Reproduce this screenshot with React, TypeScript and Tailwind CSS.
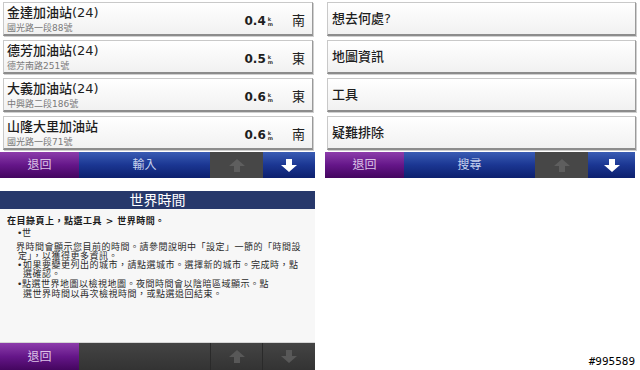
import React from "react";

const CJK = "font-['DejaVu_Sans','Noto_Sans_CJK_TC',sans-serif]";

function DownArrow({ color }: { color: string }) {
  return (
    <svg width="16" height="13" viewBox="0 0 16 13">
      <polygon points="5,0 11,0 11,6 16,6 8,13 0,6 5,6" fill={color} />
    </svg>
  );
}
function UpArrow({ color }: { color: string }) {
  return (
    <svg width="16" height="13" viewBox="0 0 16 13">
      <polygon points="5,13 11,13 11,7 16,7 8,0 0,7 5,7" fill={color} />
    </svg>
  );
}

function Unit() {
  return (
    <span className="ml-[2px] flex flex-col items-start text-[5px] text-[#333] font-bold mt-[1px]">
      <span className="leading-[5px]">k</span>
      <span className="leading-[5px]">m</span>
    </span>
  );
}

const places = [
  { name: "金達加油站(24)", addr: "國光路一段88號", dist: "0.4", dir: "南" },
  { name: "德芳加油站(24)", addr: "德芳南路251號", dist: "0.5", dir: "東" },
  { name: "大義加油站(24)", addr: "中興路二段186號", dist: "0.6", dir: "東" },
  { name: "山隆大里加油站", addr: "國光路一段71號", dist: "0.6", dir: "南" },
];

const menu = ["想去何處?", "地圖資訊", "工具", "疑難排除"];

const rowCls =
  "h-[34px] bg-linear-to-b from-[#ffffff] to-[#f1f1f1] border border-[#c9c9c9] border-b-[2px] border-b-[#8c8c8c] border-r-[#9a9a9a] shadow-[1px_1px_0_#d0d0d0]";

function ButtonBar({ middle }: { middle: string }) {
  return (
    <div className={`flex h-[26px] ${CJK}`}>
      <div className="w-[79px] flex items-center justify-center bg-linear-to-b from-[#8d3cab] via-[#651689] to-[#44065f] text-[12px] text-[#dcc2e6]">
        退回
      </div>
      <div className="w-[131px] flex items-center justify-center bg-linear-to-b from-[#3a5cb4] via-[#1b3692] to-[#0d206e] text-[12px] text-[#c6d2ee]">
        {middle}
      </div>
      <div className="w-[53px] flex items-center justify-center bg-[#474747]">
        <UpArrow color="#5e5e5e" />
      </div>
      <div className="flex-1 flex items-center justify-center bg-linear-to-b from-[#3a5cb4] via-[#1b3692] to-[#0d206e]">
        <DownArrow color="#ffffff" />
      </div>
    </div>
  );
}

export default function App() {
  return (
    <div className={`relative w-[640px] h-[370px] bg-white overflow-hidden ${CJK}`}>
      <div className="flex h-[178px] pt-[2px]">
        {/* Left list */}
        <div className="w-[315px] flex flex-col">
          <div className="flex flex-col gap-[4px] px-[3px] pr-[2px]">
            {places.map((p) => (
              <div key={p.name} className={`${rowCls} flex items-center pl-[3px] pr-[7px]`}>
                <div className="flex-1 flex flex-col">
                  <div className="text-[13px] leading-[17px] text-[#1e1e1e] font-medium">{p.name}</div>
                  <div className="text-[9px] leading-[12px] mt-[1px] text-[#7a7a7a]">{p.addr}</div>
                </div>
                <div className="flex items-center mt-[5px]">
                  <span className="text-[12px] font-bold text-[#1e1e1e] font-['DejaVu_Sans',sans-serif]">{p.dist}</span>
                  <Unit />
                  <span className="ml-[19px] text-[13px] text-[#222]">{p.dir}</span>
                </div>
              </div>
            ))}
          </div>
          <div className="mt-auto">
            <ButtonBar middle="輸入" />
          </div>
        </div>
        {/* Right menu */}
        <div className="ml-[10px] w-[312px] flex flex-col">
          <div className="flex flex-col gap-[4px] pl-[2px] pr-[1px]">
            {menu.map((m) => (
              <div key={m} className={`${rowCls} flex items-center pl-[4px]`}>
                <span className="text-[13px] text-[#1e1e1e] font-medium">{m}</span>
              </div>
            ))}
          </div>
          <div className="mt-auto mr-[2px]">
            <ButtonBar middle="搜尋" />
          </div>
        </div>
      </div>

      {/* World time panel */}
      <div className="mt-[13px] w-[315px] flex flex-col">
        <div className="h-[18px] bg-[#27386b] flex items-center justify-center text-[14px] leading-[18px] text-white">
          世界時間
        </div>
        <div className="h-[133px] bg-[#f7f7f7] pt-[8px] text-[9px] tracking-[0.5px] leading-[9.3px] text-[#2a2a2a]">
          <div className="pl-[7px] font-bold text-[#1a1a1a]">在目錄頁上，點選工具 &gt; 世界時間。</div>
          <div className="flex pl-[17px] mt-[2.5px]">
            <span className="w-[5px]">•</span>
            <span>世</span>
          </div>
          <div className="pl-[16px] mt-[4.5px]">界時間會顯示您目前的時間。請參閱說明中「設定」一節的「時間設</div>
          <div className="pl-[18px]">定」，以獲得更多資訊。</div>
          <div className="flex pl-[17px]">
            <span className="w-[6px]">•</span>
            <span>如果要變更列出的城市，請點選城市。選擇新的城市。完成時，點</span>
          </div>
          <div className="pl-[23px]">選確認。</div>
          <div className="flex pl-[17px] mt-[0.5px]">
            <span className="w-[5px]">•</span>
            <span>點選世界地圖以檢視地圖。夜間時間會以陰暗區域顯示。點</span>
          </div>
          <div className="pl-[23px]">選世界時間以再次檢視時間，或點選退回結束。</div>
        </div>
        <div className="h-[28px] flex border-t border-[#d6d6d6]">
          <div className="w-[79px] flex items-center justify-center bg-linear-to-b from-[#8d3cab] via-[#651689] to-[#44065f] text-[12px] text-[#dcc2e6]">
            退回
          </div>
          <div className="w-[132px] bg-linear-to-b from-[#444] to-[#333] border-r border-[#2a2a2a]" />
          <div className="w-[52px] flex items-center justify-center bg-linear-to-b from-[#444] to-[#333] border-r border-[#2a2a2a]">
            <UpArrow color="#585858" />
          </div>
          <div className="flex-1 flex items-center justify-center bg-linear-to-b from-[#444] to-[#333]">
            <DownArrow color="#585858" />
          </div>
        </div>
      </div>

      <div className="absolute right-[5px] bottom-[3px] text-[11px] leading-[11px] text-black font-['DejaVu_Sans_Mono',monospace] [text-shadow:1px_0_0_#fff,-1px_0_0_#fff,0_1px_0_#fff,0_-1px_0_#fff]">
        #995589
      </div>
    </div>
  );
}
